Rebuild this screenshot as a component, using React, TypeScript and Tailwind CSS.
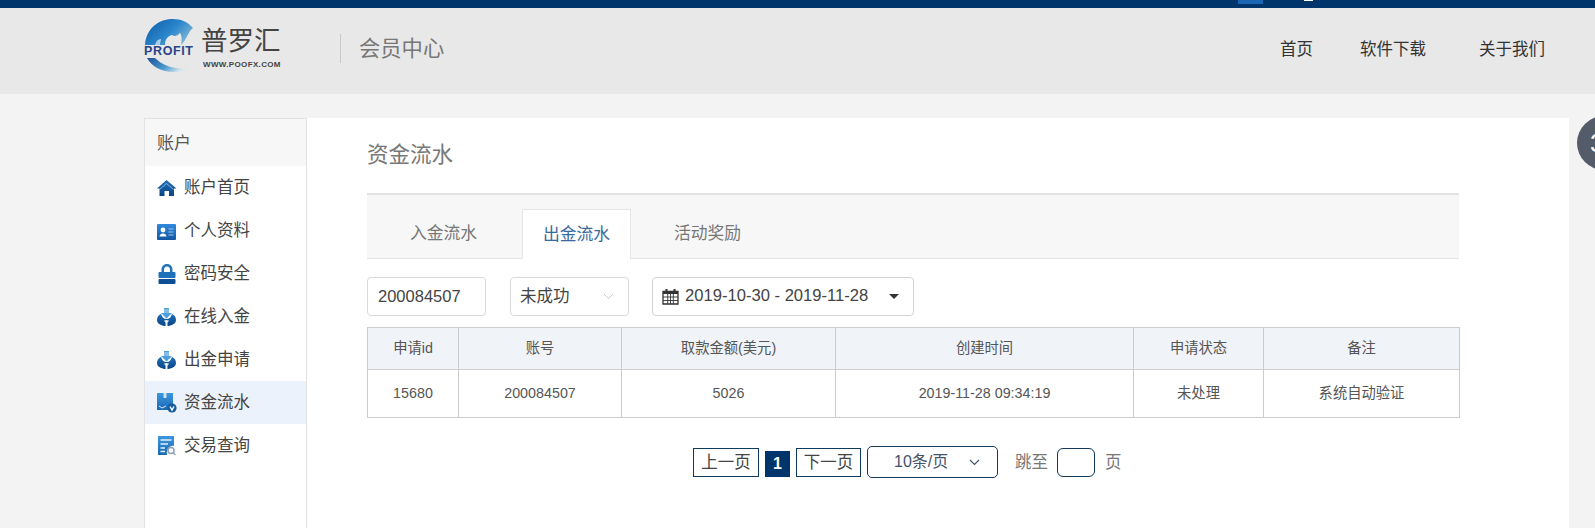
import React from "react";

const cjk = "font-['Liberation_Sans','Noto_Sans_CJK_SC',sans-serif]";

function Logo() {
  return (
    <svg width="52" height="56" viewBox="0 0 52 56" className="shrink-0">
      <defs>
        <linearGradient id="dome" x1="0" y1="0" x2="1" y2="0.6">
          <stop offset="0" stopColor="#0d5ba6" />
          <stop offset="0.6" stopColor="#2b86cb" />
          <stop offset="1" stopColor="#7db6d6" />
        </linearGradient>
        <linearGradient id="sw" x1="0" y1="0" x2="1" y2="0.4">
          <stop offset="0" stopColor="#1c4f96" />
          <stop offset="0.6" stopColor="#4b9ad0" />
          <stop offset="1" stopColor="#dbe6ec" />
        </linearGradient>
      </defs>
      <path d="M1 27 C2 11 14 1 29 1 C37 1 44 4 49 10 C46 12 44 17 41 22 C39 25 38 26 37 27 Z" fill="url(#dome)" />
      <path d="M21 27 C21 21 24 18 28 17 C31 19 33 18 36 15 C38 17 38 23 37 27 Z" fill="#e8e8e8" />
      <path d="M11 27 C12 23 14 21 17 21 C17 23 16 25 16 27 Z" fill="#cfe0ea" opacity="0.8" />
      <path d="M3 40 C8 49 19 55 33 54 C36 54 40 53 44 50 C32 52 19 48 11 40 Z" fill="url(#sw)" />
      <text x="0" y="37" fontFamily="Liberation Sans" fontWeight="700" fontSize="12.5" fill="#2a4488" textLength="49">PROFIT</text>
    </svg>
  );
}

const Icons: Record<string, React.ReactNode> = {
  home: (
    <g>
      <path d="M9.5 3 L19.5 11.5 L17 11.5 V19 H12 V14 H7.5 V19 H2.5 V11.5 H0 Z" fill="url(#ig)" />
      <path d="M2.5 12.5 L9.5 6.5 L16.5 12.5" fill="none" stroke="#bcd3ea" strokeWidth="0.7" />
    </g>
  ),
  card: (
    <g>
      <rect x="0" y="4" width="19" height="16" rx="1" fill="url(#ig3)" />
      <circle cx="6" cy="10" r="2.4" fill="#fff" />
      <path d="M2.5 16.5 C2.5 12.6 9.5 12.6 9.5 16.5 Z" fill="#fff" />
      <path d="M11.5 9 H16.5 M11.5 12 H16.5 M11.5 15 H16.5" stroke="#9cc6ee" strokeWidth="1.2" />
    </g>
  ),
  lock: (
    <g>
      <path d="M4.5 10 V7 C4.5 3.5 6.5 1 10 1 C13.5 1 15.5 3.5 15.5 7 V10 H13 V7 C13 5 12 3.6 10 3.6 C8 3.6 7 5 7 7 V10 Z" fill="#2474bd" />
      <rect x="1.5" y="9" width="17" height="6" rx="1" fill="#1f70bb" />
      <rect x="1.5" y="16" width="17" height="5" rx="1" fill="#0d4f94" />
    </g>
  ),
  cloud: (
    <g>
      <path d="M4 8 C1.5 9 0 11 0 14 C0 17.5 4 20 9.5 20 C15 20 19 17.5 19 14 C19 11 17.5 9 15 8 C14 11 12.5 13 9.5 13 C6.5 13 5 11 4 8 Z" fill="url(#ig)" />
      <path d="M7 2 H12 V7 H15 L9.5 12.5 L4 7 H7 Z" fill="#4b9fdc" />
      <path d="M7 4 H12 M7 6 H12" stroke="#d5e9f8" strokeWidth="0.8" />
      <path d="M9.5 14 V20" stroke="#e8f2fb" strokeWidth="2" />
      <path d="M7.5 14.5 L9.5 16.5 L11.5 14.5" stroke="#e8f2fb" strokeWidth="1.2" fill="none" />
    </g>
  ),
  box: (
    <g>
      <path d="M0 1 H16 V13 C13 13 11 15 11 18 H0 Z" fill="url(#ig2)" />
      <rect x="6.5" y="1" width="3" height="5" fill="#cfe4f7" />
      <path d="M2 14 L5 16 L9 14" stroke="#dcebf9" strokeWidth="1" fill="none" />
      <circle cx="15" cy="16" r="4.6" fill="#145c9e" />
      <path d="M13 14.5 L15 18 L17 14.5" stroke="#fff" strokeWidth="1.4" fill="none" />
    </g>
  ),
  doc: (
    <g>
      <path d="M1 1 H17 V11 C13 10 9 14 10 20 H1 Z" fill="url(#ig2)" />
      <path d="M3.5 5 H14.5 M3.5 9 H11 M3.5 13 H8 M3.5 16.5 H8" stroke="#e3f0fb" strokeWidth="1.3" />
      <circle cx="14" cy="15.5" r="3" fill="none" stroke="#8ba2b7" strokeWidth="1.5" />
      <path d="M16 18 L18.5 20" stroke="#8ba2b7" strokeWidth="1.5" />
    </g>
  ),
};

function NavIcon({ name }: { name: string }) {
  return (
    <svg width="20" height="21" viewBox="0 0 20 21" className="shrink-0">
      <defs>
        <linearGradient id="ig" x1="0" y1="0" x2="0" y2="1">
          <stop offset="0" stopColor="#1f6fb8" />
          <stop offset="1" stopColor="#0a4486" />
        </linearGradient>
        <linearGradient id="ig2" x1="0" y1="0" x2="0" y2="1">
          <stop offset="0" stopColor="#3d97de" />
          <stop offset="1" stopColor="#1a68b2" />
        </linearGradient>
        <linearGradient id="ig3" x1="0" y1="0" x2="0" y2="1">
          <stop offset="0" stopColor="#2f8ae0" />
          <stop offset="1" stopColor="#12569f" />
        </linearGradient>
      </defs>
      {Icons[name]}
    </svg>
  );
}

const menu = [
  ["home", "账户首页"],
  ["card", "个人资料"],
  ["lock", "密码安全"],
  ["cloud", "在线入金"],
  ["cloud", "出金申请"],
  ["box", "资金流水"],
  ["doc", "交易查询"],
];

const widths = ["w-[91px]", "w-[163px]", "w-[214px]", "w-[298px]", "w-[130px]", "w-[196px]"];
const heads = ["申请id", "账号", "取款金额(美元)", "创建时间", "申请状态", "备注"];
const cells = ["15680", "200084507", "5026", "2019-11-28 09:34:19", "未处理", "系统自动验证"];

export default function App() {
  return (
    <div className={`relative h-[528px] overflow-hidden bg-[#f3f3f3] ${cjk}`}>
      <div className="relative h-2 bg-[#00356b]">
        <div className="absolute left-[1238px] top-0 h-1 w-[25px] bg-[#1b66b3]" />
        <div className="absolute left-[1304px] top-0 h-px w-[9px] bg-white" />
      </div>

      <header className="flex h-[86px] items-start bg-[#e8e8e8] pl-[144px] pr-[50px]">
        <div className="mt-[10px] flex w-[138px] items-start">
          <Logo />
          <div className="ml-[5px] mt-[8px] flex flex-col">
            <span className="whitespace-nowrap text-[26.5px] leading-[30px] text-[#444]">普罗汇</span>
            <span className="ml-[2px] mt-[4px] whitespace-nowrap text-[8px] font-bold leading-[10px] tracking-[0.35px] text-[#444]">WWW.POOFX.COM</span>
          </div>
        </div>
        <div className="ml-[58px] mt-[26px] h-[29px] w-px bg-[#c9c9c9]" />
        <div className="ml-[18px] mt-[26px] text-[21.3px] leading-[30px] text-[#777]">会员中心</div>
        <nav className="ml-auto mt-[28px] flex gap-[48px] text-[16.5px] leading-[26px] text-[#333]">
          <a>首页</a>
          <a className="-ml-[1px]">软件下载</a>
          <a className="ml-[5px]">关于我们</a>
        </nav>
      </header>

      <div className="mt-[24px] flex h-[410px] pl-[144px]">
        <aside className="w-[163px] shrink-0 border-x border-t border-[#e2e2e2] bg-white">
          <div className="flex h-[47px] items-center bg-[#f7f7f7] pl-[12px] pt-[2px] text-[17px] text-[#555]">账户</div>
          {menu.map(([icon, label]) => (
            <div
              key={label}
              className={`flex h-[43px] items-center gap-[7px] pl-[12px] text-[16.5px] text-[#444] ${label === "资金流水" ? "bg-[#ecf2fb]" : ""}`}
            >
              <NavIcon name={icon} />
              <span>{label}</span>
            </div>
          ))}
        </aside>

        <main className="w-[1262px] shrink-0 bg-white pl-[60px] pr-[108px]">
          <div className="flex h-[75px] items-center text-[21.5px] text-[#777]">资金流水</div>
          <div className="flex h-[66px] w-[1092px] items-end border-t-2 border-b border-[#e5e5e5] border-t-[#e3e3e3] bg-[#f7f7f7] pl-[22px] text-[16.8px] text-[#777]">
            <div className="flex h-[49px] w-[109px] items-center justify-center">入金流水</div>
            <div className="-mb-px ml-[24px] flex h-[50px] w-[109px] items-center justify-center border-x border-t border-[#e5e5e5] bg-white text-[#3a6a9b]">出金流水</div>
            <div className="ml-[22px] flex h-[49px] w-[109px] items-center justify-center">活动奖励</div>
          </div>

          <div className="mt-[18px] flex h-[39px] text-[16.5px] text-[#444]">
            <div className="flex w-[119px] items-center rounded-[4px] border border-[#d9d9d9] pl-[10px]">200084507</div>
            <div className="ml-[24px] flex w-[119px] items-center justify-between rounded-[4px] border border-[#d9d9d9] pl-[9px] pr-[14px]">
              <span>未成功</span>
              <svg width="11" height="7" viewBox="0 0 11 7"><path d="M1 1 L5.5 5.5 L10 1" fill="none" stroke="#c9c9c9" strokeWidth="1" /></svg>
            </div>
            <div className="ml-[23px] flex w-[262px] items-center rounded-[4px] border border-[#d2d2d2] pl-[9px]">
              <svg width="17" height="17" viewBox="0 0 17 17" className="shrink-0">
                <path d="M1 3.5 H16 V16 H1 Z" fill="none" stroke="#333" strokeWidth="1.3" />
                <rect x="1" y="3" width="15" height="3" fill="#333" />
                <path d="M4.5 1 V4 M12.5 1 V4" stroke="#333" strokeWidth="2" />
                <path d="M1 9 H16 M1 12.5 H16 M5.7 6 V16 M8.5 6 V16 M11.3 6 V16" stroke="#333" strokeWidth="0.9" />
              </svg>
              <span className="ml-[6px] text-[16.6px]">2019-10-30 - 2019-11-28</span>
              <span className="ml-[21px] h-0 w-0 border-x-[5px] border-t-[5px] border-x-transparent border-t-[#333]" />
            </div>
          </div>

          <table className="mt-[11px] w-[1092px] table-fixed border-collapse text-center text-[14.3px] text-[#555]">
            <thead>
              <tr className="h-[42px] bg-[#f0f3f8]">
                {heads.map((h, i) => (
                  <th key={h} className={`border border-[#cccccc] font-normal ${widths[i]}`}>{h}</th>
                ))}
              </tr>
            </thead>
            <tbody>
              <tr className="h-[48px]">
                {cells.map((c) => (
                  <td key={c} className="border border-[#cccccc]">{c}</td>
                ))}
              </tr>
            </tbody>
          </table>

          <div className="ml-[326px] mt-[28px] flex items-center">
            <div className="flex h-[29px] w-[66px] items-center justify-center border border-[#0e3a5f] text-[16.5px] text-[#444]">上一页</div>
            <div className="ml-[6px] mt-[3px] flex h-[26px] w-[25px] items-center justify-center bg-[#00356b] text-[16px] font-bold text-white">1</div>
            <div className="ml-[6px] flex h-[29px] w-[65px] items-center justify-center border border-[#0e3a5f] text-[16.5px] text-[#444]">下一页</div>
            <div className="ml-[6px] flex h-[32px] w-[131px] items-center rounded-[5px] border border-[#14395c] pl-[26px] text-[16px] text-[#44526b]">
              <span>10条/页</span>
              <svg width="11" height="7" viewBox="0 0 11 7" className="ml-[21px]"><path d="M1 1 L5.5 5.5 L10 1" fill="none" stroke="#44526b" strokeWidth="1.2" /></svg>
            </div>
            <span className="ml-[17px] text-[16.5px] text-[#777]">跳至</span>
            <div className="ml-[9px] h-[29px] w-[38px] rounded-[6px] border border-[#14395c]" />
            <span className="ml-[10px] text-[16.5px] text-[#777]">页</span>
          </div>
        </main>
      </div>

      <div className="absolute left-[1577px] top-[116px] flex h-[54px] w-[54px] items-center rounded-full bg-[#545b69] pl-[13px] text-[26px] font-light text-white">3</div>
    </div>
  );
}
